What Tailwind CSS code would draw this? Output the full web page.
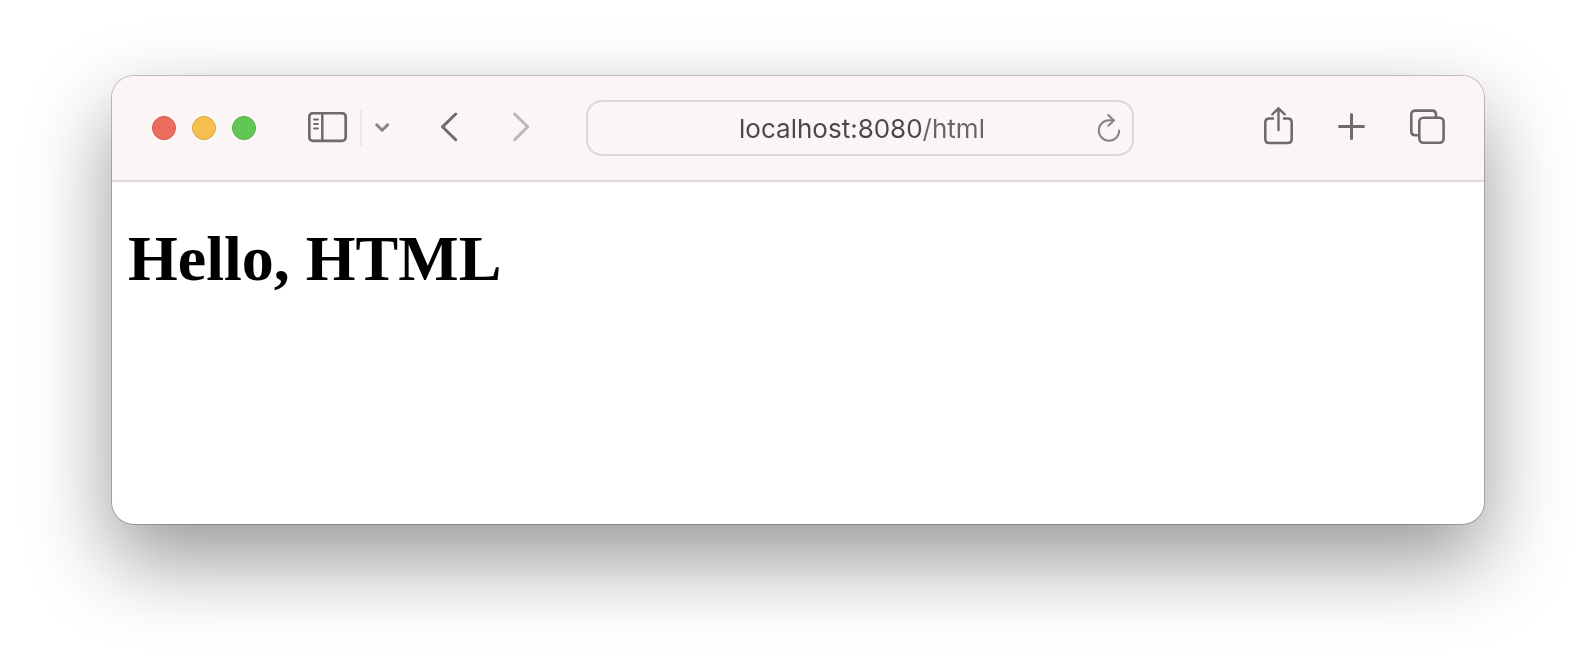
<!DOCTYPE html>
<html lang="en">
<head>
<meta charset="utf-8">
<meta name="viewport" content="width=device-width, initial-scale=1">
<title>Hello, HTML</title>
<script src="https://cdn.jsdelivr.net/npm/@tailwindcss/browser@4"></script>
</head>
<body class="bg-white px-28 pt-19 pb-36">
<div class="overflow-hidden rounded-[22px] bg-white shadow-[0_0_0_1px_rgba(0,0,0,0.22),0_36px_84px_rgba(0,0,0,0.41)]">
  <header class="flex h-[106px] items-center border-b-2 border-[#dfdcdc] bg-[#fbf5f5] pr-[38px] pl-10 text-[#716a6a]">
    <div class="flex gap-4">
      <button type="button" aria-label="Close" class="size-6 rounded-full border border-[#d8534a] bg-[#ec6b5f]"></button>
      <button type="button" aria-label="Minimize" class="size-6 rounded-full border border-[#dba53c] bg-[#f5bf4f]"></button>
      <button type="button" aria-label="Zoom" class="size-6 rounded-full border border-[#52ae3e] bg-[#61c654]"></button>
    </div>
    <button type="button" aria-label="Sidebar" class="ml-13">
      <svg class="h-8 w-10" viewBox="0 0 40 32" fill="none" stroke="currentColor" stroke-linecap="round">
        <rect x="1.3" y="1.200" width="36.4" height="27.6" rx="3.6" stroke-width="2.700"/>
        <path d="M14.3 1.700v26.300" stroke-width="2.500" stroke-linecap="butt"/>
        <path d="M6 7.500h4M6 12h4M6 16.500h4" stroke-width="1.800"/>
      </svg>
    </button>
    <span class="ml-3 h-9 w-0.5 bg-[#eee8e8]"></span>
    <button type="button" aria-label="Tab groups" class="ml-3">
      <svg class="h-3 w-4" viewBox="0 0 16 12" fill="none" stroke="#8b8386" stroke-width="3" stroke-linecap="round" stroke-linejoin="round"><path d="M2.700 2.800l5.500 5.500L13.700 2.800"/></svg>
    </button>
    <button type="button" aria-label="Back" class="ml-12">
      <svg class="h-8 w-6" viewBox="0 0 24 32" fill="none" stroke="currentColor" stroke-width="3" stroke-linecap="round" stroke-linejoin="round"><path d="M17.700 2L4.500 14.800L17.700 27.700"/></svg>
    </button>
    <button type="button" aria-label="Forward" class="ml-12" disabled>
      <svg class="h-8 w-6" viewBox="0 0 24 32" fill="none" stroke="#beb7b7" stroke-width="3" stroke-linecap="round" stroke-linejoin="round"><path d="M4.600 2L17.700 14.800L4.600 27.700"/></svg>
    </button>
    <div class="ml-13 flex h-14 min-w-0 flex-1 items-center rounded-2xl border-2 border-[#ddd7d7] pr-2 pl-10">
      <input type="text" aria-label="Address" value="localhost:8080/html" class="h-10 w-full min-w-0 bg-[linear-gradient(to_right,#484848_calc(50%+60px),#686565_calc(50%+60px))] bg-clip-text text-center font-['Inter',sans-serif] text-[26px] text-transparent outline-none">
      <button type="button" aria-label="Reload">
        <svg class="h-8 w-7" viewBox="0 0 28 32" fill="none" stroke="#898383" stroke-width="2" stroke-linecap="round" stroke-linejoin="round">
          <path d="M18 8.300H13A10.200 10.200 0 1 0 23.200 18.500"/>
          <path d="M12.300 3L17.800 8.500L12.300 13.800"/>
        </svg>
      </button>
    </div>
    <div class="ml-32 flex items-center gap-9">
      <button type="button" aria-label="Share">
        <svg class="h-10 w-9 overflow-visible" viewBox="0 0 36 40" fill="none" stroke="currentColor" stroke-width="2.600" stroke-linecap="round" stroke-linejoin="round">
          <path d="M12 10.500H7.300Q3.300 10.500 3.300 14.500V31Q3.300 35 7.300 35H25.700Q29.700 35 29.700 31V14.500Q29.700 10.500 25.700 10.500H21" stroke-linecap="butt"/>
          <path d="M16.500 22V0.300M10.300 6.300L16.500 0.300L22.700 6.300" stroke-width="2.400"/>
        </svg>
      </button>
      <button type="button" aria-label="New tab">
        <svg class="size-9" viewBox="0 0 36 36" fill="none" stroke="currentColor" stroke-width="3" stroke-linecap="round"><path d="M17.500 4.500v24M5.500 16.500h24"/></svg>
      </button>
      <button type="button" aria-label="Tab overview">
        <svg class="size-10" viewBox="0 0 40 40" fill="none" stroke="currentColor" stroke-width="2.600">
          <path d="M13 27.300H9.300Q5.300 27.300 5.300 23.300V6.600Q5.300 2.600 9.300 2.600H26Q30 2.600 30 6.600V10"/>
          <rect x="13.300" y="9.800" width="24.300" height="24.900" rx="4"/>
        </svg>
      </button>
    </div>
  </header>
  <main class="min-h-[342px] px-4 pt-10">
    <h1 class="font-['Liberation_Serif',serif] text-[64px] leading-[74px] font-bold text-black">Hello, HTML</h1>
  </main>
</div>
</body>
</html>
